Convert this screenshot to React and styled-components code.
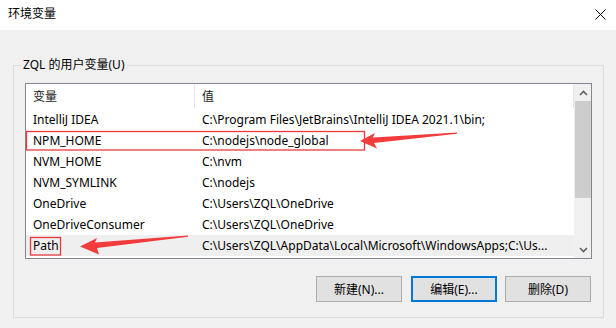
import React from 'react'
import styled, { createGlobalStyle } from 'styled-components'

const GlobalStyle = createGlobalStyle`
  html, body {
    margin: 0;
    padding: 0;
    background: #f0f0f0;
  }
  * {
    box-sizing: border-box;
  }
`

const Window = styled.div`
  position: relative;
  width: 616px;
  height: 328px;
  display: flex;
  flex-direction: column;
  background: #f0f0f0;
  font-family: "Noto Sans", "Noto Sans CJK SC", sans-serif;
  font-size: 12px;
  color: #000;
  overflow: hidden;
`
const TitleBar = styled.div`
  height: 30px;
  flex: none;
  display: flex;
  align-items: center;
  justify-content: space-between;
  padding: 0 10px 2px 8px;
  background: #fff;
`
const Title = styled.div`
  font-size: 12px;
  line-height: 16px;
`
const Body = styled.div`
  flex: 1;
  padding: 27px 12px 10px 13px;
`
const Group = styled.fieldset`
  margin: 0;
  height: 100%;
  border: 1px solid #dcdcdc;
  padding: 10px 11px 15px 11px;
  display: flex;
  flex-direction: column;
`
const Legend = styled.legend`
  margin-left: -4px;
  padding: 0 2px;
  line-height: 16px;
  height: 16px;
`
const ListBox = styled.div`
  height: 176px;
  border: 1px solid #828790;
  background: #fff;
  display: flex;
`
const Rows = styled.div`
  flex: 1;
  display: flex;
  flex-direction: column;
`
const Header = styled.div`
  height: 25px;
  display: flex;
  align-items: center;
`
const HeadCell = styled.div`
  width: ${p => p.$w || 'auto'};
  flex: ${p => (p.$w ? 'none' : 1)};
  height: 23px;
  line-height: 23px;
  padding-left: 7px;
  border-right: 1px solid #e5e5e5;
  color: #1a1a1a;
`
const Row = styled.div`
  height: 21px;
  line-height: 21px;
  display: flex;
  align-items: center;
  background: ${p => (p.$selected ? '#efefef' : 'transparent')};
`
const Cell = styled.div`
  width: ${p => p.$w || 'auto'};
  flex: ${p => (p.$w ? 'none' : 1)};
  min-width: 0;
  padding-left: 7px;
  white-space: nowrap;
  overflow: hidden;
`
const ScrollBar = styled.div`
  width: 17px;
  flex: none;
  background: #f0f0f0;
  display: flex;
  flex-direction: column;
  padding-left: 1px;
`
const ScrollBtn = styled.div`
  height: 17px;
  display: flex;
  align-items: center;
  justify-content: center;
`
const Thumb = styled.div`
  height: 97px;
  background: #cdcdcd;
`
const Track = styled.div`
  flex: 1;
`
const ButtonRow = styled.div`
  margin-top: 17px;
  display: flex;
  justify-content: flex-end;
  gap: 8px;
  padding-right: 1px;
`
const Button = styled.button`
  width: 86px;
  height: 26px;
  font-family: inherit;
  font-size: 12px;
  color: #000;
  background: #e1e1e1;
  border: ${p => (p.$default ? '2px solid #0078d7' : '1px solid #adadad')};
  padding: 0;
  margin: 0;
  &:first-child {
    margin-right: 1px;
  }
`
const Overlay = styled.svg`
  position: absolute;
  left: 0;
  top: 0;
  pointer-events: none;
`

const Chevron = ({ down }) => (
  <svg width="9" height="6" viewBox="0 0 9 6">
    <path
      d={down ? 'M1 1 L4.5 4.5 L8 1' : 'M1 5 L4.5 1.5 L8 5'}
      fill="none"
      stroke="#606060"
      strokeWidth="1.6"
    />
  </svg>
)

const vars = [
  ['IntelliJ IDEA', 'C:\\Program Files\\JetBrains\\IntelliJ IDEA 2021.1\\bin;'],
  ['NPM_HOME', 'C:\\nodejs\\node_global'],
  ['NVM_HOME', 'C:\\nvm'],
  ['NVM_SYMLINK', 'C:\\nodejs'],
  ['OneDrive', 'C:\\Users\\ZQL\\OneDrive'],
  ['OneDriveConsumer', 'C:\\Users\\ZQL\\OneDrive'],
  ['Path', 'C:\\Users\\ZQL\\AppData\\Local\\Microsoft\\WindowsApps;C:\\Us...'],
]

const App = () => {
  return (
    <Window>
      <GlobalStyle />
      <TitleBar>
        <Title>环境变量</Title>
        <svg width="11" height="11" viewBox="0 0 11 11">
          <path d="M0.5 0.5 L10.5 10.5 M10.5 0.5 L0.5 10.5" stroke="#000" strokeWidth="1" />
        </svg>
      </TitleBar>
      <Body>
        <Group>
          <Legend>ZQL 的用户变量(U)</Legend>
          <ListBox>
            <Rows>
              <Header>
                <HeadCell $w="169px">变量</HeadCell>
                <HeadCell>值</HeadCell>
              </Header>
              {vars.map(([name, value]) => (
                <Row key={name} $selected={name === 'Path'}>
                  <Cell $w="169px">{name}</Cell>
                  <Cell>{value}</Cell>
                </Row>
              ))}
            </Rows>
            <ScrollBar>
              <ScrollBtn><Chevron /></ScrollBtn>
              <Thumb />
              <Track />
              <ScrollBtn><Chevron down /></ScrollBtn>
            </ScrollBar>
          </ListBox>
          <ButtonRow>
            <Button>新建(N)...</Button>
            <Button $default>编辑(E)...</Button>
            <Button>删除(D)</Button>
          </ButtonRow>
        </Group>
      </Body>
      <Overlay width="616" height="328">
        <rect x="26.5" y="131.5" width="338" height="18.5" fill="none" stroke="#ea3a3c" strokeWidth="1.3" />
        <rect x="30.5" y="237.5" width="30" height="17.5" fill="none" stroke="#ea3a3c" strokeWidth="1.3" />
        <polygon points="360,141 375,133 373,137.5 457,132.5 457,133.8 374,143 377,148.5" fill="#f23b3b" />
        <polygon points="80,246.5 97,238 95,242.5 188,235.5 188,236.8 97,248 99,254.5" fill="#f23b3b" />
      </Overlay>
    </Window>
  )
}

export default App
